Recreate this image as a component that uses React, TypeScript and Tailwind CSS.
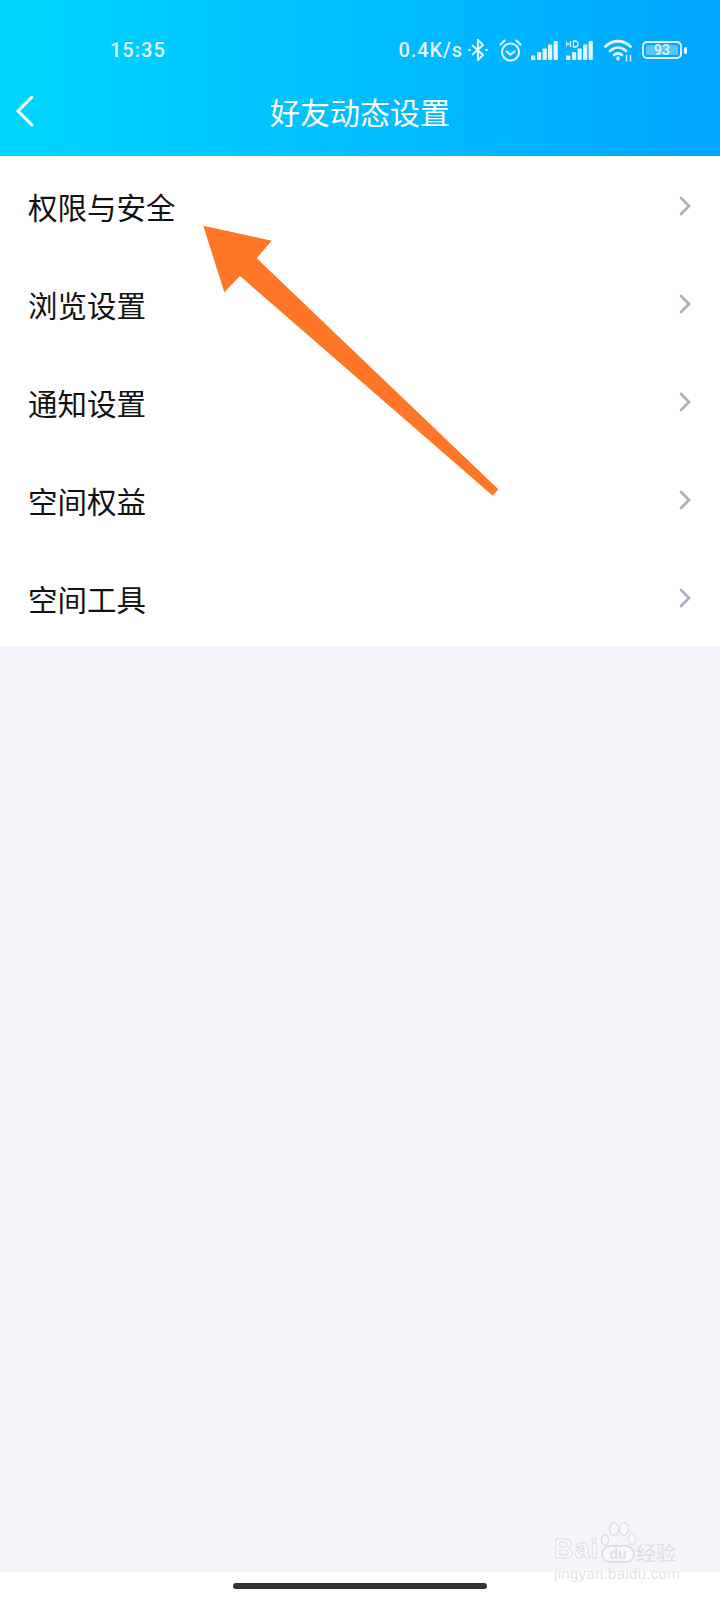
import React from 'react'

const rows = ['权限与安全', '浏览设置', '通知设置', '空间权益', '空间工具']

const cjk = "font-['Noto_Sans_CJK_SC','Noto_Sans',sans-serif]"

function Bluetooth() {
  return (
    <svg width="20" height="24" viewBox="0 0 20 24" fill="none" stroke="#e3f6ff" strokeWidth="2">
      <path d="M4 7l11 10-5 5V2l5 5L4 17" strokeLinejoin="round" />
      <circle cx="1.5" cy="12" r="1.3" fill="#e3f6ff" stroke="none" />
      <circle cx="18.5" cy="12" r="1.3" fill="#e3f6ff" stroke="none" />
    </svg>
  )
}

function Alarm() {
  return (
    <svg width="23" height="23" viewBox="0 0 23 23" fill="none" stroke="#e3f6ff" strokeWidth="2" strokeLinecap="round">
      <circle cx="11.5" cy="13" r="8.6" />
      <path d="M7.5 12.5l4 3 4-3" />
      <path d="M1.5 5.5L5.5 1.6M21.5 5.5L17.5 1.6" strokeWidth="2.2" />
    </svg>
  )
}

function Signal({ hd }: { hd?: boolean }) {
  return (
    <svg width="27" height="21" viewBox="0 0 27 21" fill="#e3f6ff">
      <rect x="0" y="15.5" width="4.4" height="4.5" rx="1" />
      <rect x="6" y="12" width="4.2" height="8" rx="1" />
      <rect x="11.6" y="8.5" width="4.2" height="11.5" rx="1" />
      <rect x="17" y="4.5" width="4.2" height="15.5" rx="1" />
      <rect x="22.6" y="1" width="4.2" height="19" rx="1" />
      {hd && (
        <path d="M0 1v6M0 4h4.5M4.5 1v6M7.5 1v6h1.5c4 0 4-6 0-6z" fill="none" stroke="#e3f6ff" strokeWidth="1.3" />
      )}
    </svg>
  )
}

function Wifi() {
  return (
    <svg width="29" height="23" viewBox="0 0 29 23" fill="none" stroke="#e3f6ff" strokeWidth="2.8" strokeLinecap="round">
      <path d="M1.5 7.5C8.5 .5 19.5 .5 26.5 7.5" />
      <path d="M6 12C11 7.5 17 7.5 22 12" />
      <path d="M10 16c2.6-2 5.4-2 8 0" />
      <circle cx="14" cy="19.5" r="2" fill="#e3f6ff" stroke="none" />
      <path d="M22.5 16.5v5.5M26.5 16.5v5.5" strokeWidth="1.4" />
    </svg>
  )
}

function Battery() {
  return (
    <div className="flex items-center gap-[2px]">
      <div className="w-[40px] h-[18px] rounded-[5px] border-2 border-[#e3f6ff] p-[2px] flex">
        <div className="flex-1 rounded-[2px] bg-[#58c4fb] flex items-center justify-center text-[14px] leading-none text-[#e3f6ff] font-['Roboto',sans-serif] font-medium">
          93
        </div>
      </div>
      <div className="w-[3px] h-[7px] rounded-full bg-[#e3f6ff]" />
    </div>
  )
}

function Arrow() {
  return (
    <svg className="absolute left-[200px] top-[222px]" width="302" height="278" viewBox="200 222 302 278" fill="#ff7627">
      <polygon points="203.3,225.7 271.7,240.7 256.7,258.3 498.3,489.3 492.7,495.7 240,276 224.3,292.3" />
    </svg>
  )
}

function Watermark() {
  return (
    <div className="absolute left-[554px] top-[1522px] w-[130px] h-[62px] leading-none">
      <svg className="absolute left-[46px] top-0" width="36" height="26" viewBox="0 0 36 26" fill="#f9f9fb" stroke="#dfdfe5" strokeWidth="1.3">
        <ellipse cx="5" cy="18" rx="3.5" ry="5" />
        <ellipse cx="14" cy="7" rx="4.5" ry="6.3" />
        <ellipse cx="24" cy="7" rx="4.5" ry="6.3" />
        <ellipse cx="32" cy="17" rx="3.5" ry="5.5" />
      </svg>
      <div className="pt-[14px] flex items-end">
        <span className="text-[27px] tracking-[1px] font-['Liberation_Sans',sans-serif] font-bold text-[#f9f9fb] [-webkit-text-stroke:1px_#dfdfe5]">Bai</span>
        <span className="ml-[2px] w-[34px] h-[18px] flex-shrink-0 flex items-center justify-center rounded-full border-2 border-[#dfdfe5] bg-[#f9f9fb] text-[14px] font-bold text-[#dfdfe5] font-['Liberation_Sans',sans-serif]">du</span>
        <span className={`ml-[1px] text-[20px] whitespace-nowrap text-[#dedee3] ${cjk}`}>经验</span>
      </div>
      <div className="mt-[3px] text-[15px] tracking-[0.3px] text-[#e4e4e8] font-['Liberation_Sans',sans-serif]">jingyan.baidu.com</div>
    </div>
  )
}

export default function App() {
  return (
    <div className={`relative w-[720px] h-[1600px] overflow-hidden bg-white flex flex-col ${cjk}`}>
      <header className="h-[156px] flex-shrink-0 bg-gradient-to-r from-[#00d6ff] to-[#00a6ff] text-white">
        <div className="h-[102px] pl-[110px] pr-[33px] pt-[37px] flex items-start">
          <span className="text-[20px] leading-[26px] tracking-[1px] font-medium text-[#e3f6ff] font-['Roboto',sans-serif]">15:35</span>
          <div className="ml-auto flex items-center h-[26px]">
            <span className="text-[20px] leading-[26px] tracking-[0.9px] font-medium text-[#e3f6ff] font-['Roboto',sans-serif]">0.4K/s</span>
            <span className="ml-[5px]"><Bluetooth /></span>
            <span className="ml-[11px]"><Alarm /></span>
            <span className="ml-[9px]"><Signal /></span>
            <span className="ml-[8px]"><Signal hd /></span>
            <span className="ml-[11px]"><Wifi /></span>
            <span className="ml-[9px]"><Battery /></span>
          </div>
        </div>
        <div className="relative flex items-center justify-center h-[40px] -mt-[11px]">
          <svg className="absolute left-[16px] top-[4px]" width="18" height="32" viewBox="0 0 18 32" fill="none" stroke="#fff" strokeWidth="3" strokeLinecap="round" strokeLinejoin="round">
            <path d="M16 2L2 16l14 14" />
          </svg>
          <h1 className="text-[30px] leading-[40px] font-normal">好友动态设置</h1>
        </div>
      </header>

      <main className="h-[490px] flex-shrink-0 bg-white">
        {rows.map((label) => (
          <div key={label} className="h-[98px] pl-[28px] pr-[29px] flex items-center justify-between">
            <span className="text-[29.5px] leading-[40px] mt-[2px] text-[#111]">{label}</span>
            <svg className="mt-[2px]" width="12" height="20" viewBox="0 0 12 20" fill="none" stroke="#a8b2bc" strokeWidth="2.8" strokeLinecap="round">
              <path d="M2 2l8 8-8 8" />
            </svg>
          </div>
        ))}
      </main>

      <div className="flex-1 bg-[#f4f5f9]" />

      <div className="h-[28px] flex-shrink-0 bg-white flex justify-center pt-[11px]">
        <div className="w-[254px] h-[6px] rounded-full bg-[#333]" />
      </div>

      <Arrow />
      <Watermark />
    </div>
  )
}
